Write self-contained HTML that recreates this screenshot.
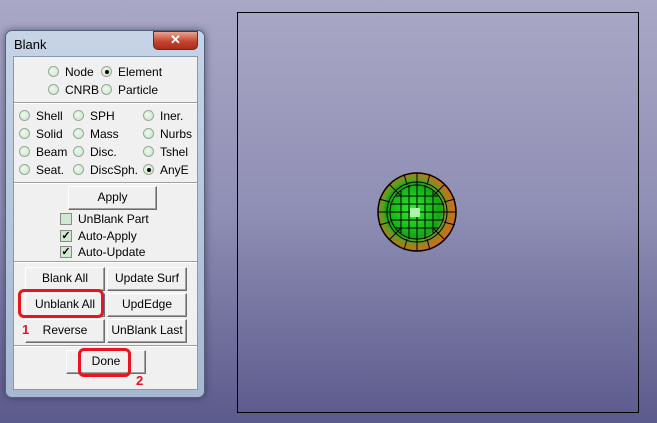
<!DOCTYPE html>
<html><head><style>
*{margin:0;padding:0;box-sizing:border-box}
body{width:657px;height:423px;overflow:hidden;position:relative;font-family:"Liberation Sans",Arial,sans-serif;font-size:12px;color:#000;white-space:nowrap;
background:linear-gradient(#a9a8c6 0%,#8f8eb4 50%,#5b5a8c 100%)}
.a{position:absolute}
.win{left:5px;top:30px;width:200px;height:368px;border-radius:7px;background:linear-gradient(#c6d4e6,#b3c3d9 60%,#a7b8d0);border:1px solid #55607a;box-shadow:0 0 8px rgba(40,40,70,.6)}
.panel{left:13px;top:56px;width:185px;height:334px;background:#f0f0f0;border:1px solid #8898ae}
.close{left:153px;top:31px;width:45px;height:19px;border-radius:0 0 5px 5px;background:linear-gradient(#e3a593,#c7442f 55%,#a92c1c);border:1px solid #6b2a20;color:#fff;font-weight:bold;text-align:center;line-height:16px;font-size:13px}
.r{width:11px;height:11px;border-radius:50%;background:radial-gradient(circle at 40% 40%,#eef8ee,#c8e6c8);border:1px solid #9aa79a}
.r.on::after{content:"";position:absolute;left:3px;top:3px;width:4px;height:4px;border-radius:50%;background:#000}
.cb{width:12px;height:12px;border:1px solid #8a8a8a;background:#cfe8cf;font-size:11px;line-height:10px;text-align:center;font-weight:bold}
.sep{left:14px;width:183px;height:2px;border-top:1px solid #a0a0a0;border-bottom:1px solid #fff}
.b{height:24px;background:#f0f0f0;border:1px solid;border-color:#fff #6d6d6d #6d6d6d #fff;box-shadow:inset -1px -1px 0 #a0a0a0;text-align:center;line-height:21px}
.red{border:3px solid #e8141e;border-radius:6px}
.n{color:#e8141e;font-weight:bold;font-size:13px}
</style></head><body>
<div class="a" style="left:237px;top:12px;width:402px;height:401px;border:1px solid #000"></div>
<svg class="a" style="left:376px;top:171px" width="84" height="84" viewBox="0 0 84 84">
<defs><radialGradient id="g" cx="45%" cy="48%" r="50%"><stop offset="0" stop-color="#2cf02c"/><stop offset=".7" stop-color="#11a811"/><stop offset=".78" stop-color="#5aa020"/><stop offset="1" stop-color="#c8701a"/></radialGradient></defs>
<circle cx="41" cy="41" r="39" fill="url(#g)" stroke="#000" stroke-width="1.5"/>
<circle cx="41" cy="41" r="30" fill="none" stroke="#000"/>
<circle cx="41" cy="41" r="27" fill="none" stroke="#000"/>
<g stroke="#000" stroke-width="1" fill="none">
<path d="M2 41H80M41 2V80M13 13L25 25M69 13L57 25M13 69L25 57M69 69L57 57M3 28L14 31M79 28L68 31M3 54L14 51M79 54L68 51M28 3L31 14M54 3L51 14M28 79L31 68M54 79L51 68"/>
<path d="M14 33H68M14 49H68M33 14V68M49 14V68M20 25H62M20 57H62M25 20V62M57 20V62"/>
</g>
<rect x="34" y="37" width="10" height="9" fill="#aaf5aa"/>
</svg>
<div class="a win"></div>
<div class="a" style="left:14px;top:37px;font-size:13px">Blank</div>
<div class="a close">✕</div>
<div class="a panel"></div>
<div class="a r" style="left:48px;top:66px"></div><div class="a" style="left:65px;top:65px">Node</div>
<div class="a r on" style="left:101px;top:66px"></div><div class="a" style="left:118px;top:65px">Element</div>
<div class="a r" style="left:48px;top:84px"></div><div class="a" style="left:65px;top:83px">CNRB</div>
<div class="a r" style="left:101px;top:84px"></div><div class="a" style="left:118px;top:83px">Particle</div>
<div class="a sep" style="top:102px"></div>
<div class="a r" style="left:19px;top:110px"></div><div class="a" style="left:36px;top:109px">Shell</div>
<div class="a r" style="left:73px;top:110px"></div><div class="a" style="left:90px;top:109px">SPH</div>
<div class="a r" style="left:143px;top:110px"></div><div class="a" style="left:160px;top:109px">Iner.</div>
<div class="a r" style="left:19px;top:128px"></div><div class="a" style="left:36px;top:127px">Solid</div>
<div class="a r" style="left:73px;top:128px"></div><div class="a" style="left:90px;top:127px">Mass</div>
<div class="a r" style="left:143px;top:128px"></div><div class="a" style="left:160px;top:127px">Nurbs</div>
<div class="a r" style="left:19px;top:146px"></div><div class="a" style="left:36px;top:145px">Beam</div>
<div class="a r" style="left:73px;top:146px"></div><div class="a" style="left:90px;top:145px">Disc.</div>
<div class="a r" style="left:143px;top:146px"></div><div class="a" style="left:160px;top:145px">Tshel</div>
<div class="a r" style="left:19px;top:164px"></div><div class="a" style="left:36px;top:163px">Seat.</div>
<div class="a r" style="left:73px;top:164px"></div><div class="a" style="left:90px;top:163px">DiscSph.</div>
<div class="a r on" style="left:143px;top:164px"></div><div class="a" style="left:160px;top:163px">AnyE</div>
<div class="a sep" style="top:182px"></div>
<div class="a b" style="left:68px;top:186px;width:89px">Apply</div>
<div class="a cb" style="left:60px;top:213px"></div><div class="a" style="left:78px;top:212px">UnBlank Part</div>
<div class="a cb" style="left:60px;top:230px">✓</div><div class="a" style="left:78px;top:229px">Auto-Apply</div>
<div class="a cb" style="left:60px;top:246px">✓</div><div class="a" style="left:78px;top:245px">Auto-Update</div>
<div class="a sep" style="top:261px"></div>
<div class="a b" style="left:25px;top:267px;width:80px">Blank All</div>
<div class="a b" style="left:107px;top:267px;width:80px">Update Surf</div>
<div class="a b" style="left:25px;top:293px;width:80px">Unblank All</div>
<div class="a b" style="left:107px;top:293px;width:80px">UpdEdge</div>
<div class="a b" style="left:25px;top:319px;width:80px">Reverse</div>
<div class="a b" style="left:107px;top:319px;width:80px">UnBlank Last</div>
<div class="a sep" style="top:345px"></div>
<div class="a b" style="left:66px;top:350px;width:80px">Done</div>
<div class="a red" style="left:18px;top:289px;width:86px;height:29px"></div>
<div class="a red" style="left:78px;top:348px;width:53px;height:29px"></div>
<div class="a n" style="left:22px;top:322px">1</div>
<div class="a n" style="left:136px;top:373px">2</div>
</body></html>
